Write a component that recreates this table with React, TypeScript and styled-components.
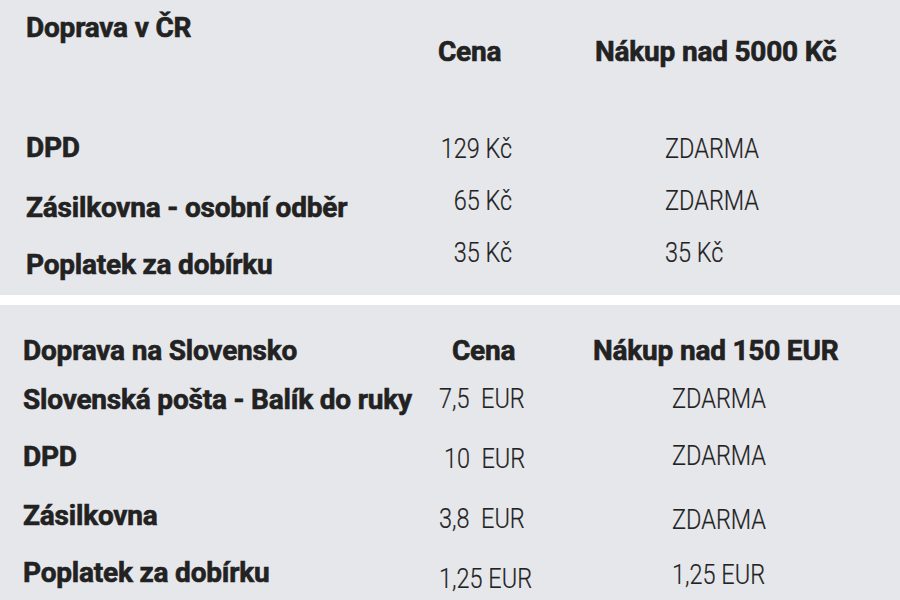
import React from "react";
import styled, { createGlobalStyle } from "styled-components";

const Global = createGlobalStyle`
  html, body { margin: 0; padding: 0; background: #ffffff; }
  body { font-family: Roboto, "Liberation Sans", Arial, sans-serif; color: #222222; }
`;

const Page = styled.div`
  width: 900px;
  display: flex;
  flex-direction: column;
  gap: 10px;
`;

const Panel = styled.section<{ $pt: number }>`
  height: 295px;
  box-sizing: border-box;
  background: #e6e7eb;
  padding-top: ${(p) => p.$pt}px;
  display: flex;
  flex-direction: column;
`;

const Row = styled.div<{ $cols: string; $pl: number; $mt: number }>`
  display: grid;
  grid-template-columns: ${(p) => p.$cols};
  align-items: start;
  padding-left: ${(p) => p.$pl}px;
  margin-top: ${(p) => p.$mt}px;
`;

const Label = styled.div<{ $dy?: number }>`
  font-size: 28px;
  font-weight: 700;
  line-height: 32px;
  letter-spacing: -0.2px;
  -webkit-text-stroke: 0.6px #222222;
  white-space: nowrap;
  margin-top: ${(p) => p.$dy ?? 0}px;
`;

const Head = styled(Label)<{ $dx?: number }>`
  padding-left: ${(p) => p.$dx ?? 0}px;
`;

const Value = styled.div<{ $dy?: number; $dx?: number; $w?: number }>`
  display: flex;
  justify-content: ${(p) => (p.$w ? "flex-end" : "flex-start")};
  font-size: 27px;
  font-weight: 300;
  line-height: 32px;
  white-space: pre;
  margin-top: ${(p) => p.$dy ?? 0}px;
  padding-left: ${(p) => p.$dx ?? 0}px;
  width: ${(p) => (p.$w ? `${p.$w}px` : "auto")};
`;

const Narrow = styled.span<{ $right?: boolean }>`
  display: inline-block;
  flex: none;
  transform: scaleX(0.87);
  transform-origin: ${(p) => (p.$right ? "right" : "left")} center;
  -webkit-text-stroke: 0.2px #222222;
`;

const CZ_COLS = "412px 157px 1fr";
const SK_COLS = "416px 154px 1fr";

export default function App() {
  return (
    <>
      <Global />
      <Page>
        <Panel $pt={12}>
          <Row $cols={CZ_COLS} $pl={26} $mt={0}>
            <Label>Doprava v ČR</Label>
            <Head $dy={24}>Cena</Head>
            <Head $dy={24}>Nákup nad 5000 Kč</Head>
          </Row>
          <Row $cols={CZ_COLS} $pl={26} $mt={64}>
            <Label>DPD</Label>
            <Value $dy={1} $w={74}><Narrow $right>129 Kč</Narrow></Value>
            <Value $dy={1} $dx={70}><Narrow>ZDARMA</Narrow></Value>
          </Row>
          <Row $cols={CZ_COLS} $pl={26} $mt={20}>
            <Label $dy={7}>Zásilkovna - osobní odběr</Label>
            <Value $w={74}><Narrow $right>65 Kč</Narrow></Value>
            <Value $dx={70}><Narrow>ZDARMA</Narrow></Value>
          </Row>
          <Row $cols={CZ_COLS} $pl={26} $mt={13}>
            <Label $dy={12}>Poplatek za dobírku</Label>
            <Value $w={74}><Narrow $right>35 Kč</Narrow></Value>
            <Value $dx={70}><Narrow>35 Kč</Narrow></Value>
          </Row>
        </Panel>
        <Panel $pt={30}>
          <Row $cols={SK_COLS} $pl={23} $mt={0}>
            <Label>Doprava na Slovensko</Label>
            <Head $dx={13}>Cena</Head>
            <Head>Nákup nad 150 EUR</Head>
          </Row>
          <Row $cols={SK_COLS} $pl={23} $mt={16}>
            <Label $dy={1}>Slovenská pošta - Balík do ruky</Label>
            <Value><Narrow>{"7,5  EUR"}</Narrow></Value>
            <Value $dx={79}><Narrow>ZDARMA</Narrow></Value>
          </Row>
          <Row $cols={SK_COLS} $pl={23} $mt={24}>
            <Label $dy={1}>DPD</Label>
            <Value $dy={3} $dx={5}><Narrow>{"10  EUR"}</Narrow></Value>
            <Value $dx={79}><Narrow>ZDARMA</Narrow></Value>
          </Row>
          <Row $cols={SK_COLS} $pl={23} $mt={25}>
            <Label>Zásilkovna</Label>
            <Value $dy={3}><Narrow>{"3,8  EUR"}</Narrow></Value>
            <Value $dy={4} $dx={79}><Narrow>ZDARMA</Narrow></Value>
          </Row>
          <Row $cols={SK_COLS} $pl={23} $mt={21}>
            <Label>Poplatek za dobírku</Label>
            <Value $dy={6}><Narrow>1,25 EUR</Narrow></Value>
            <Value $dy={2} $dx={79}><Narrow>1,25 EUR</Narrow></Value>
          </Row>
        </Panel>
      </Page>
    </>
  );
}
